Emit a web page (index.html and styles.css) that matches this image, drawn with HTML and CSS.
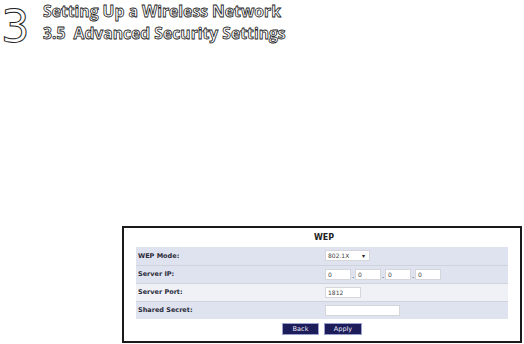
FILE: index.html
```html
<!DOCTYPE html>
<html lang="en">
<head>
  <meta charset="UTF-8">
  <title>Advanced Security Settings</title>
  <link rel="stylesheet" href="styles.css">
</head>
<body>

  <header class="chapter">
    <div class="chapter-num">3</div>
    <div class="chapter-titles">
      <div class="chapter-title">Setting Up a Wireless Network</div>
      <div class="chapter-title">3.5&nbsp; Advanced Security Settings</div>
    </div>
  </header>

  <div class="panel">
    <div class="panel-title">WEP</div>

    <table class="settings">
      <tr>
        <td class="label">WEP Mode:</td>
        <td>
          <div class="select">802.1X <span class="arrow">&#9662;</span></div>
        </td>
      </tr>
      <tr>
        <td class="label">Server IP:</td>
        <td>
          <div class="ip">
            <span class="field ip-part">0</span><span class="dot">.</span>
            <span class="field ip-part">0</span><span class="dot">.</span>
            <span class="field ip-part">0</span><span class="dot">.</span>
            <span class="field ip-part">0</span>
          </div>
        </td>
      </tr>
      <tr class="light">
        <td class="label">Server Port:</td>
        <td><span class="field port">1812</span></td>
      </tr>
      <tr>
        <td class="label">Shared Secret:</td>
        <td><span class="field secret"></span></td>
      </tr>
    </table>

    <div class="buttons">
      <button class="btn back">Back</button>
      <button class="btn apply">Apply</button>
    </div>
  </div>

</body>
</html>
```

FILE: styles.css
```css
body {
  margin: 0;
  background: #ffffff;
  font-family: 'DejaVu Sans', Verdana, sans-serif;
}

/* chapter heading */
.chapter {
  display: flex;
  align-items: flex-start;
  padding-left: 1px;
  height: 226px;
}

.chapter-num {
  font-family: 'DejaVu Sans', sans-serif;
  font-size: 45px;
  line-height: normal;
  color: #ffffff;
  -webkit-text-stroke: 1px #222;
  width: 42px;
}

.chapter-title {
  font-family: 'Open Sans', sans-serif;
  font-weight: bold;
  font-size: 15.7px;
  line-height: normal;
  color: #ffffff;
  -webkit-text-stroke: 0.8px #222;
}

/* WEP panel */
.panel {
  margin-left: 122px;
  width: 372px;
  height: 113px;
  border: 2px solid #1a1a1a;
  padding: 0 12px;
}

.panel-title {
  text-align: center;
  font-weight: bold;
  font-size: 8px;
  color: #222;
  height: 19px;
  line-height: 19px;
  padding-left: 4px;
}

.settings {
  width: 372px;
  border-collapse: collapse;
}

.settings tr {
  background: #dfe3ef;
  height: 18px;
}

.settings tr + tr td {
  border-top: 1px solid #cfd3dc;
}

.settings tr.light {
  background: #eff1f7;
}

.settings td {
  padding: 0;
  font-size: 7px;
  color: #333;
  vertical-align: middle;
}

.settings td.label {
  width: 187px;
  padding-left: 2px;
  font-weight: bold;
  font-size: 6.5px;
  color: #2a2a3a;
}

.select {
  width: 41px;
  height: 9px;
  background: #fff;
  border: 1px solid #d4d6dc;
  font-size: 6px;
  line-height: 9px;
  padding-left: 2px;
  color: #444;
  position: relative;
}

.select .arrow {
  position: absolute;
  right: 4px;
  top: 0;
  font-size: 6px;
  color: #222;
}

.ip {
  display: flex;
  align-items: flex-end;
}

.field {
  display: block;
  height: 9px;
  background: #fff;
  border: 1px solid #d4d6dc;
  font-size: 6px;
  line-height: 9px;
  padding-left: 2px;
  color: #444;
}

.ip-part {
  width: 22px;
}

.dot {
  width: 4px;
  font-size: 7px;
  line-height: 8px;
  text-align: center;
  color: #333;
}

.port {
  width: 32px;
}

.secret {
  width: 71px;
}

.buttons {
  display: flex;
  justify-content: center;
  gap: 5px;
  margin-top: 4px;
}

.btn {
  height: 12px;
  padding: 0;
  background: #1c1c5a;
  border: 1px solid #9aa0d0;
  color: #e8e8f4;
  font-family: 'DejaVu Sans', Verdana, sans-serif;
  font-size: 6.5px;
  line-height: 10px;
}

.back {
  width: 37px;
}

.apply {
  width: 38px;
}
```
